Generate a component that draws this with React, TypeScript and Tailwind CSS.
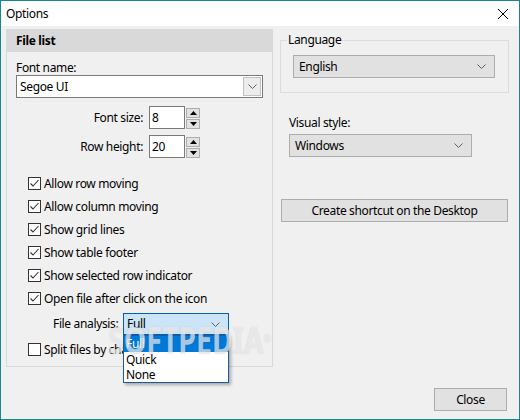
import React from 'react'

const Chevron = () => (
  <svg width="9" height="5" viewBox="0 0 9 5" className="shrink-0">
    <path d="M0.5 0.5 L4.5 4.5 L8.5 0.5" fill="none" stroke="#606060" strokeWidth="1" />
  </svg>
)

const CheckBox = ({ checked }: { checked: boolean }) => (
  <svg width="13" height="13" viewBox="0 0 13 13" className="shrink-0">
    <rect x="0.5" y="0.5" width="12" height="12" fill="#fff" stroke="#333" strokeWidth="1" />
    {checked && <path d="M2.5 6.5 L5 9 L10.5 3" fill="none" stroke="#333" strokeWidth="1.1" />}
  </svg>
)

const Spinner = () => (
  <div className="ml-[1px] flex flex-col gap-[1px] pt-[1px]">
    {[0, 1].map((i) => (
      <div
        key={i}
        className="w-[14px] h-[10px] bg-[#e1e1e1] border border-[#adadad] flex items-center justify-center"
      >
        <svg width="7" height="4" viewBox="0 0 7 4">
          <path d={i === 0 ? 'M0 4 L3.5 0 L7 4 Z' : 'M0 0 L3.5 4 L7 0 Z'} fill="#000" />
        </svg>
      </div>
    ))}
  </div>
)

const NumField = ({ label, value }: { label: string; value: string }) => (
  <div className="flex items-center">
    <div className="w-[136px] text-right whitespace-nowrap">{label}</div>
    <div className="ml-[6px] w-[36px] h-[23px] bg-white border border-[#7a7a7a] flex items-center pl-[2px]">
      {value}
    </div>
    <Spinner />
  </div>
)

const GrayCombo = ({ value, width }: { value: string; width: string }) => (
  <div className={`${width} h-[23px] bg-[#e1e1e1] border border-[#adadad] flex items-center justify-between pl-[5px] pr-[8px]`}>
    <span>{value}</span>
    <Chevron />
  </div>
)

const checks = [
  { label: 'Allow row moving', checked: true },
  { label: 'Allow column moving', checked: true },
  { label: 'Show grid lines', checked: true },
  { label: 'Show table footer', checked: true },
  { label: 'Show selected row indicator', checked: true },
  { label: 'Open file after click on the icon', checked: true },
]

export default function App() {
  return (
    <div className="relative w-[520px] h-[420px] border border-[#16878c] flex flex-col bg-[#f0f0f0] text-black text-[12px] leading-[16px] tracking-[-0.35px] font-['Segoe_UI','Noto_Sans',sans-serif] overflow-hidden">
      <div className="h-[25px] bg-white flex items-center justify-between pl-[5px] pr-[11px]">
        <span>Options</span>
        <svg width="10" height="10" viewBox="0 0 10 10">
          <path d="M0 0 L10 10 M10 0 L0 10" stroke="#000" strokeWidth="1" />
        </svg>
      </div>

      <div className="flex-1 flex flex-col pl-[5px] pt-[3px]">
        <div className="flex gap-[7px]">
          {/* File list panel */}
          <div className="w-[267px] h-[338px] border border-[#d9d9d9] flex flex-col">
            <div className="h-[22px] bg-[#d9d9d9] flex items-center pl-[9px] font-bold">File list</div>
            <div className="pl-[9px] mt-[8px] leading-[15px]">Font name:</div>
            <div className="ml-[9px] w-[247px] h-[23px] bg-white border border-[#7a7a7a] flex items-center justify-between pl-[3px] pr-[1px]">
              <span>Segoe UI</span>
              <div className="w-[18px] h-[19px] bg-[#ececec] border border-[#c2c2c2] flex items-center justify-center">
                <Chevron />
              </div>
            </div>
            <div className="mt-[8px]">
              <NumField label="Font size:" value="8" />
            </div>
            <div className="mt-[6px]">
              <NumField label="Row height:" value="20" />
            </div>

            <div className="mt-[14px] pl-[21px] flex flex-col">
              {checks.map((c) => (
                <div key={c.label} className="h-[23px] flex items-center gap-[3px] whitespace-nowrap">
                  <CheckBox checked={c.checked} />
                  <span>{c.label}</span>
                </div>
              ))}
            </div>

            <div className="mt-[3px] pl-[46px] flex items-center">
              <span className="w-[64px] whitespace-nowrap">File analysis:</span>
              <div className="relative ml-[6px]">
                <div className="w-[106px] h-[22px] bg-[#cce4f7] border border-[#005fb8] flex items-center justify-between pl-[3px] pr-[8px]">
                  <span>Full</span>
                  <Chevron />
                </div>
                <div className="absolute left-0 top-full z-10 w-[106px] bg-white border border-[#1b5c9e] shadow-[2px_2px_3px_rgba(0,0,0,0.3)] flex flex-col">
                  <div className="h-[16px] bg-[#0078d7] text-white pl-[2px] flex items-center">Full</div>
                  <div className="h-[15px] pl-[2px] flex items-center">Quick</div>
                  <div className="h-[15px] pl-[2px] flex items-center">None</div>
                </div>
              </div>
            </div>

            <div className="mt-[3px] pl-[21px] h-[23px] flex items-center gap-[3px] whitespace-nowrap">
              <CheckBox checked={false} />
              <span>Split files by characters</span>
            </div>
          </div>

          {/* Right column */}
          <div className="w-[229px] flex flex-col">
            <fieldset className="mt-[3px] border border-[#dcdcdc] pb-[14px]">
              <legend className="ml-[6px] px-[1px] leading-[16px]">Language</legend>
              <div className="ml-[12px] mt-[7px]">
                <GrayCombo value="English" width="w-[202px]" />
              </div>
            </fieldset>
            <div className="ml-[9px] mt-[22px]">Visual style:</div>
            <div className="ml-[9px] mt-[3px]">
              <GrayCombo value="Windows" width="w-[183px]" />
            </div>
            <div className="ml-[1px] mt-[42px] w-[227px] h-[23px] bg-[#e1e1e1] border border-[#adadad] flex items-center justify-center whitespace-nowrap">
              Create shortcut on the Desktop
            </div>
          </div>
        </div>

        <div className="mt-auto mb-[8px] mr-[12px] flex justify-end">
          <div className="w-[73px] h-[23px] bg-[#e1e1e1] border border-[#adadad] flex items-center justify-center">
            Close
          </div>
        </div>
      </div>

      <div className="pointer-events-none absolute left-[107px] top-[318px] z-20 origin-left scale-x-[0.75] text-[38px] leading-[40px] font-bold tracking-[0px] text-white/60 [text-shadow:0_0_1px_rgba(120,120,120,0.35)] font-['Noto_Sans',sans-serif] whitespace-nowrap">
        SOFTPEDIA<span className="text-[12px] align-top">®</span>
      </div>
    </div>
  )
}
